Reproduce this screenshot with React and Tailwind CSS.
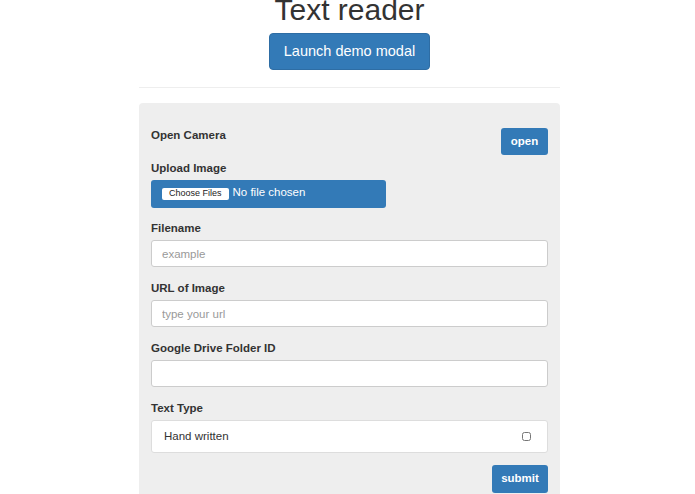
import { useState } from "react";

const fieldLabel = "block h-4 text-[11.5px] leading-4 font-bold text-[#333]";
const textInput =
  "block w-full h-[27px] px-[10px] rounded-[3px] border border-[#ccc] bg-white text-[11.5px] text-[#555] placeholder:text-[#999] outline-none";

export default function App() {
  const [filename, setFilename] = useState("");
  const [url, setUrl] = useState("");
  const [folderId, setFolderId] = useState("");
  const [handWritten, setHandWritten] = useState(false);

  return (
    <div
      className="w-full h-[494px] overflow-hidden bg-white pl-[4px]"
      style={{ fontFamily: '"Liberation Sans", Arial, sans-serif' }}
    >
      {/* Header */}
      <h1 className="mt-[-5px] text-center text-[30px] leading-[29px] font-normal text-[#333]">
        Text reader
      </h1>
      <div className="flex justify-center mt-[9px]">
        <button className="w-[161px] h-[37px] rounded-[4px] border border-[#2e6da4] bg-[#337ab7] text-white text-[14.5px]">
          Launch demo modal
        </button>
      </div>
      <hr className="mx-auto mt-[17px] w-[421px] border-t border-[#eee]" />

      {/* Form panel */}
      <div className="mx-auto mt-[15px] w-[421px] h-[420px] rounded-[4px] bg-[#eeeeee] px-3 pt-[25px]">
        <div className="flex justify-between items-start">
          <span className={`${fieldLabel} -mt-px`}>Open Camera</span>
          <button className="w-[47px] h-[27px] rounded-[3px] bg-[#337ab7] text-white text-[11.5px] font-semibold">
            open
          </button>
        </div>

        <label className={`${fieldLabel} mt-[5px]`}>Upload Image</label>
        <div className="mt-1 flex items-center w-[235px] h-[28px] rounded-[3px] bg-[#337ab7] pl-[11px]">
          <span className="flex items-center h-[12px] px-[7px] rounded-[2px] bg-white text-[9px] text-[#222]">
            Choose Files
          </span>
          <span className="ml-1 -mt-[3px] text-[11.5px] text-white">No file chosen</span>
        </div>

        <label className={`${fieldLabel} mt-3`}>Filename</label>
        <input
          className={`${textInput} mt-1`}
          placeholder="example"
          value={filename}
          onChange={(e) => setFilename(e.target.value)}
        />

        <label className={`${fieldLabel} mt-[13px]`}>URL of Image</label>
        <input
          className={`${textInput} mt-1`}
          placeholder="type your url"
          value={url}
          onChange={(e) => setUrl(e.target.value)}
        />

        <label className={`${fieldLabel} mt-[13px]`}>Google Drive Folder ID</label>
        <input
          className={`${textInput} mt-1`}
          value={folderId}
          onChange={(e) => setFolderId(e.target.value)}
        />

        <label className={`${fieldLabel} mt-[13px]`}>Text Type</label>
        <div className="mt-1 flex items-center justify-between h-[33px] rounded-[3px] border border-[#ddd] bg-white pl-3 pr-4">
          <span className="text-[11.5px] text-[#333]">Hand written</span>
          <input
            type="checkbox"
            className="w-[9px] h-[9px] accent-[#337ab7]"
            checked={handWritten}
            onChange={(e) => setHandWritten(e.target.checked)}
          />
        </div>

        <div className="flex justify-end mt-3">
          <button className="w-[56px] h-[28px] rounded-[3px] bg-[#337ab7] text-white text-[11.5px] font-semibold">
            submit
          </button>
        </div>
      </div>
    </div>
  );
}
